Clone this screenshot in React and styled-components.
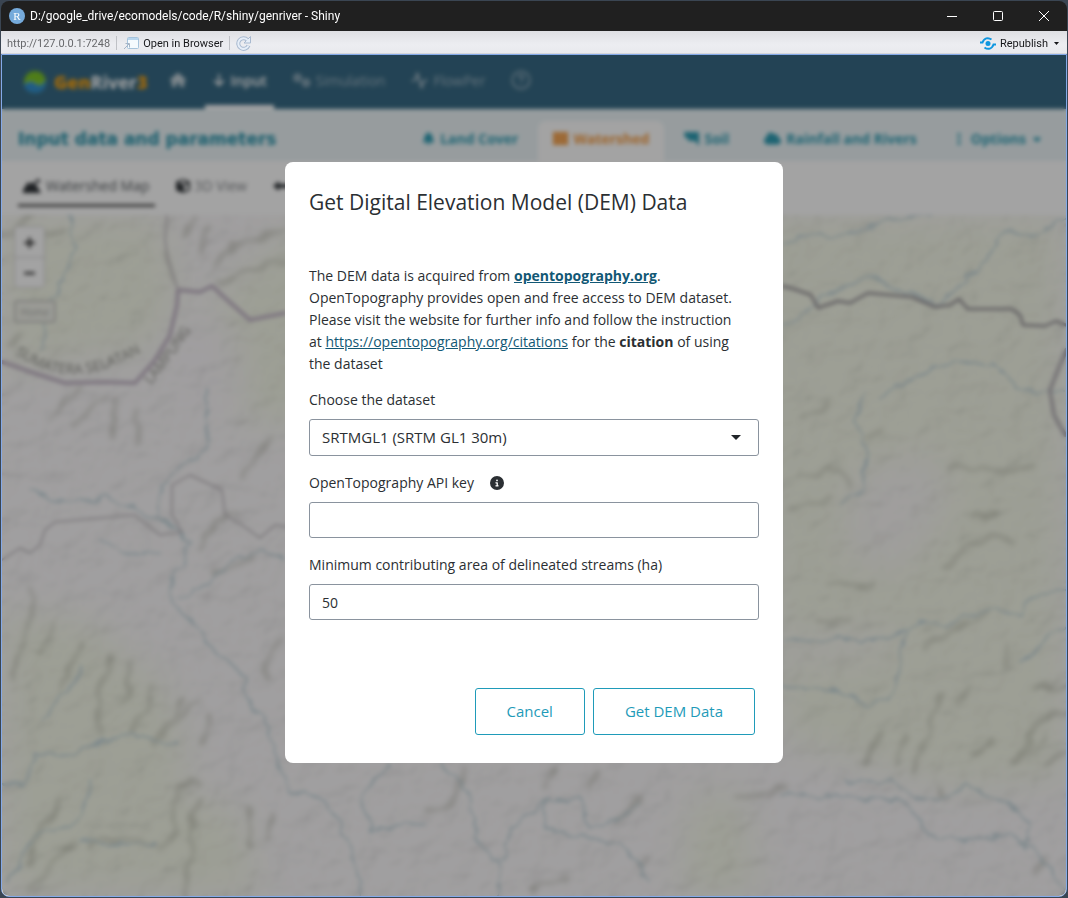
import React, { useState } from "react";
import styled, { createGlobalStyle, css } from "styled-components";
import { FaHouse, FaArrowDown, FaGears, FaBell, FaCloud, FaEllipsisVertical, FaCube, FaCaretDown, FaCircleInfo } from "react-icons/fa6";
import { LuActivity } from "react-icons/lu";

const GlobalStyle = createGlobalStyle`
  * { box-sizing: border-box; }
  html { background: #3a4552; }
  body {
    margin: 0;
    font-family: "Open Sans", "Noto Sans", sans-serif;
    font-size: 14px;
    color: #2b2f33;
  }
  button, input, select { font: inherit; color: inherit; }
`;

const Window = styled.div`
  min-height: 100vh;
  padding: 1px;
  display: flex;
  flex-direction: column;
`;

const TitleBar = styled.header`
  height: 30px;
  flex: none;
  display: flex;
  align-items: center;
  padding-left: 8px;
  background: #202020;
  border-radius: 8px 8px 0 0;
  color: #fff;
  font-size: 12px;
`;

const RBadge = styled.span`
  width: 16px;
  height: 16px;
  margin-right: 5px;
  border-radius: 50%;
  background: #75aadb;
  font: 11px/16px "Liberation Serif", serif;
  text-align: center;
`;

const Caption = styled.span`
  flex: 1;
  font-family: Roboto, sans-serif;
  white-space: nowrap;
`;

const WindowButton = styled.button`
  width: 46px;
  height: 30px;
  padding: 0;
  border: 0;
  background: none;
  display: grid;
  place-items: center;
  color: #fff;
`;

const ToolBar = styled.div`
  height: 23px;
  flex: none;
  display: flex;
  align-items: center;
  gap: 6px;
  padding: 2px 8px 0 6px;
  background: linear-gradient(#dedfe3, #ecedf1 60%, #e9eaee);
  border-bottom: 1px solid #d3d5da;
  font-family: Roboto, sans-serif;
  font-size: 11px;
  white-space: nowrap;
`;

const Address = styled.span`
  color: #67686b;
`;

const Divider = styled.span`
  width: 1px;
  height: 14px;
  background: #bfc1c6;
`;

const ToolButton = styled.button`
  display: flex;
  align-items: center;
  gap: 4px;
  padding: 0;
  border: 0;
  background: none;
  color: #16171a;
  margin-left: ${(p) => (p.$end ? "auto" : 0)};
`;

const Viewer = styled.div`
  position: relative;
  flex: 1;
  display: flex;
  flex-direction: column;
  border: 1px solid #84a9e8;
  border-radius: 0 0 8px 8px;
  overflow: hidden;
`;

const Navbar = styled.nav`
  height: 54px;
  flex: none;
  display: flex;
  align-items: stretch;
  background: #386a85;
  padding-left: 22px;
`;

const Brand = styled.a`
  display: flex;
  align-items: center;
  gap: 8px;
  margin-right: 15px;
  color: #fff;
  font-size: 18px;
  font-weight: 700;
  text-decoration: none;
  b { color: #fda50f; }
`;

const NavItem = styled.a`
  display: flex;
  align-items: center;
  gap: 5px;
  padding: 0 7px;
  margin-right: 12px;
  color: #9fb6c4;
  text-decoration: none;
  border-bottom: 4px solid transparent;
  ${(p) => p.$bright && css`color: #c3d2da;`}
  ${(p) => p.$active && css`
    color: #fff;
    font-weight: 600;
    border-bottom-color: #fff;
  `}
`;

const SubHeader = styled.header`
  height: 52px;
  flex: none;
  display: flex;
  align-items: stretch;
  background: #ecf5f8;
  padding: 0 8px 0 16px;
`;

const PageTitle = styled.h1`
  margin: 0 auto 0 0;
  align-self: center;
  padding-top: 8px;
  color: #2592aa;
  font: bold 17px "DejaVu Sans", sans-serif;
  white-space: nowrap;
`;

const SectionTab = styled.a`
  display: flex;
  align-items: center;
  gap: 5px;
  margin-top: 12px;
  margin-left: 5px;
  padding: 0 15px 5px;
  border-radius: 8px 8px 0 0;
  color: #2f9db4;
  font-weight: 700;
  text-decoration: none;
  white-space: nowrap;
  ${(p) => p.$active && css`
    background: #fff;
    color: #f59a3e;
  `}
`;

const ViewTabs = styled.nav`
  height: 54px;
  flex: none;
  display: flex;
  gap: 16px;
  padding: 0 16px 8px;
  background: #fff;
`;

const ViewTab = styled.a`
  display: flex;
  align-items: center;
  gap: 5px;
  padding: 6px 5px 0;
  border-bottom: 3px solid transparent;
  color: #86898d;
  text-decoration: none;
  svg { color: #33373b; }
  ${(p) => p.$active && css`
    color: #555a5e;
    border-bottom-color: #666;
  `}
`;

const MapPane = styled.main`
  position: relative;
  flex: 1;
  min-height: 400px;
  background: #f6f7ef;
`;

const Terrain = styled.svg`
  position: absolute;
  inset: 0;
  width: 100%;
  height: 100%;
`;

const Relief = styled.rect`
  mix-blend-mode: multiply;
`;

const MapControls = styled.div`
  position: relative;
  display: flex;
  flex-direction: column;
  align-items: flex-start;
  gap: 12px;
  padding: 11px 12px;
`;

const ZoomGroup = styled.div`
  display: flex;
  flex-direction: column;
  border: 1px solid #d0d0d0;
  border-radius: 4px;
  overflow: hidden;
`;

const ZoomButton = styled.button`
  width: 29px;
  height: 30px;
  padding: 0 0 2px;
  border: 0;
  background: #fff;
  color: #333;
  font-size: 22px;
  font-weight: 700;
  line-height: 26px;
  & + & { border-top: 1px solid #ccc; }
`;

const HomeButton = styled.button`
  width: 42px;
  height: 23px;
  padding: 0;
  border: 2px solid #c9cac5;
  border-radius: 3px;
  background: #f1f2ea;
  color: #b3b5b0;
  font-size: 10px;
  line-height: 18px;
`;

const Backdrop = styled.div`
  position: absolute;
  inset: 0;
  display: flex;
  justify-content: center;
  align-items: flex-start;
  padding: 107px 16px 16px;
  background: rgba(0, 0, 0, 0.36);
  backdrop-filter: blur(2px);
`;

const Dialog = styled.form`
  width: 100%;
  max-width: 498px;
  padding: 24px;
  border-radius: 8px;
  background: #fff;
`;

const DialogTitle = styled.h2`
  margin: 0 0 47px;
  font-size: 21px;
  font-weight: 400;
  line-height: 32px;
`;

const Intro = styled.p`
  margin: 0 0 14px;
  padding-right: 14px;
  line-height: 22px;
`;

const TextLink = styled.a`
  color: #125875;
  font-weight: ${(p) => (p.$strong ? 700 : 400)};
`;

const Field = styled.div`
  margin-bottom: 16px;
`;

const Label = styled.label`
  display: flex;
  align-items: center;
  gap: 16px;
  margin-bottom: 8px;
  line-height: 22px;
`;

const control = css`
  display: block;
  width: 100%;
  height: 36px;
  padding: 0 12px;
  border: 1px solid #8a939e;
  border-radius: 3px;
  background: #fff;
  outline: 0;
`;

const Input = styled.input`${control}`;

const SelectWrap = styled.div`
  position: relative;
  svg {
    position: absolute;
    right: 18px;
    top: 16px;
    pointer-events: none;
  }
`;

const Select = styled.select`
  ${control}
  height: 37px;
  padding-bottom: 2px;
  font-size: 15px;
  appearance: none;
`;

const Actions = styled.div`
  display: flex;
  justify-content: flex-end;
  gap: 8px;
  padding: 52px 4px 4px;
`;

const ActionButton = styled.button`
  height: 47px;
  padding: 0 31px 2px;
  border: 1px solid #1f9bb9;
  border-radius: 3px;
  background: #fff;
  color: #1f9bb9;
  font-size: 15px;
  font-weight: 500;
`;

const sections = [
  { name: "Land Cover", icon: <FaBell size={13} /> },
  { name: "Watershed", icon: <Grid />, active: true },
  { name: "Soil", icon: <Flag /> },
  { name: "Rainfall and Rivers", icon: <FaCloud size={17} /> },
];

const rivers = [
  "M70 215 75 245 65 275 48 305 42 350",
  "M208 390 208 425 205 450 180 470 162 485 158 520 180 530 188 545 182 567 171 575 172 605 195 625 212 650 240 672 252 705 270 730 280 770 292 790 325 800 340 825 357 870 361 896",
  "M30 490 60 503 105 498 135 510 160 522 183 532",
  "M100 540 125 555 160 552",
  "M178 600 205 585 235 562 260 548 285 560",
  "M2 783 25 785 35 755 70 755 100 742 135 735 175 745",
  "M10 880 35 835 75 825 85 805 90 780",
  "M80 840 110 845 155 843",
  "M45 720 60 695 78 680 82 665",
  "M783 245 800 235 850 237 890 218 935 215",
  "M1066 217 1035 235 1005 230 985 260 960 285 945 300 938 305 895 288 870 278 835 290 800 318 783 325",
  "M880 398 905 382 950 362 995 365 1020 390 1066 392",
  "M865 392 855 420 868 450 862 490 840 505",
  "M1066 590 1030 598 1020 615 990 608 950 625 915 622 902 640 900 670 890 698 870 705 835 690 783 687",
  "M783 795 850 797 900 800 920 820 925 835 965 840 1010 835 1035 850 1066 890",
  "M845 782 890 780 915 798 950 798 965 785 1010 805 1030 825 1025 850",
  "M1066 625 1040 645 1020 665",
  "M440 765 470 790 475 840 502 865 497 896",
  "M502 860 510 830 545 800 580 800 590 828 620 818 640 805",
  "M545 800 545 828 620 845 650 880",
  "M390 765 362 795 372 830 425 822",
  "M783 640 880 640 905 630",
];
const borders = [
  "M2 362 40 375 65 383 105 382 135 383 155 360 170 335 177 305 178 290 200 292 212 286 225 298 250 320 285 313",
  "M783 286 797 290 811 295 818 308 838 301 850 303 868 293 912 297 935 307 950 305 959 299 968 309 1012 309 1020 315 1023 325 1045 326 1056 321 1066 325",
  "M1066 350 1058 370 1050 390 1054 415 1065 435",
];
const roads = [
  "M2 560 20 548 30 553 40 545 45 530 55 522 135 515 160 535 182 532 172 515 172 485 190 475 222 490 225 515 242 525 260 538 275 525 290 527",
  "M167 215 165 240 168 260 178 290",
];
const ridges = [
  "M285 230 255 240 230 248 216 265 M285 265 250 268 222 282 M210 230 202 250 M190 215 184 235",
  "M105 395 92 412 72 426 M115 400 120 420 110 440 M140 408 135 440 M80 390 60 405 50 420",
  "M2 235 18 225 35 215 M40 235 70 228 M165 255 172 280 M10 345 25 335",
  "M110 660 100 700 98 730 M130 670 125 705 M35 590 28 630 12 680 M84 645 60 690 M55 625 38 650 M180 700 155 745 M155 680 148 705 130 735",
  "M200 700 180 715 165 735 M250 560 215 570 M240 515 215 520 200 550 M272 440 240 478",
  "M60 800 45 825 30 850 28 865 M75 845 45 870 30 890 M195 780 177 795 175 830 158 850 M200 800 190 850 185 896 M90 845 155 840",
  "M250 810 250 845 M272 815 270 840 M265 680 275 640 M205 745 210 720 M465 765 455 800 425 815",
  "M555 765 545 790 M600 770 588 790 M640 800 620 820 M530 890 570 882 M640 860 650 855 M740 800 783 785",
  "M950 470 1000 465 M1000 475 1040 465 M970 520 1000 510 M950 565 985 535 1015 545 M925 650 985 610 M870 580 830 585",
  "M815 622 850 618 M1010 640 1005 665 M945 690 935 715 920 745 M970 690 955 705 M1066 680 1035 690 M1066 710 1035 720 1020 755",
  "M880 735 865 765 M905 735 895 765 M925 745 915 770 M990 740 970 758 M1040 740 1015 765 M1066 750 1045 765",
  "M800 475 840 468 850 490 M790 510 830 500 M870 435 885 432 M800 420 830 402 M1045 855 1035 870 M940 785 945 800",
];

function Grid() {
  return (
    <svg width="15" height="13" viewBox="0 0 15 13" fill="currentColor">
      <path d="M0 0h15v13H0z" />
      <path d="M5 0v13M10 0v13M0 4h15M0 9h15" stroke="#fff" strokeOpacity=".35" />
    </svg>
  );
}

function Flag() {
  return (
    <svg width="15" height="14" viewBox="0 0 15 14" fill="currentColor">
      <path d="M0 0h15v14l-4-5H4V6H1z" />
    </svg>
  );
}

function Mountain() {
  return (
    <svg width="18" height="15" viewBox="0 0 18 15" fill="currentColor">
      <path d="M0 15V12L5 4l3 2 3-3 7 12z" />
      <circle cx="15" cy="3" r="2" />
    </svg>
  );
}

function Logo() {
  return (
    <svg width="22" height="22" viewBox="0 0 22 22">
      <circle cx="11" cy="11" r="11" fill="#7cc427" />
      <path d="M0 14C4 9 8 10 12 13s7 1 10-4c1 8-4 13-11 13C5 22 1 19 0 14z" fill="#3390cf" />
      <path d="M1 13c4-4 7-3 10-1s7 1 10-3" fill="none" stroke="#9fd5a5" />
    </svg>
  );
}

function TerrainMap() {
  return (
    <Terrain viewBox="2 215 1064 681" preserveAspectRatio="xMidYMid slice" aria-hidden="true">
      <defs>
        <filter id="relief" x="0" y="0" width="100%" height="100%">
          <feTurbulence type="fractalNoise" baseFrequency="0.03 0.04" numOctaves="4" seed="11" />
          <feDiffuseLighting surfaceScale="7" diffuseConstant="1.15" lightingColor="#fff">
            <feDistantLight azimuth="225" elevation="60" />
          </feDiffuseLighting>
        </filter>
        <filter id="soft"><feGaussianBlur stdDeviation="18" /></filter>
        <filter id="shade" x="-5%" y="-5%" width="110%" height="110%">
          <feTurbulence type="fractalNoise" baseFrequency="0.04" numOctaves="2" seed="4" result="n" />
          <feDisplacementMap in="SourceGraphic" in2="n" scale="20" xChannelSelector="R" yChannelSelector="G" />
          <feGaussianBlur stdDeviation="2" />
        </filter>
        <filter id="meander" x="-5%" y="-5%" width="110%" height="110%">
          <feTurbulence type="fractalNoise" baseFrequency="0.07" numOctaves="2" seed="8" result="n" />
          <feDisplacementMap in="SourceGraphic" in2="n" scale="12" xChannelSelector="R" yChannelSelector="G" />
        </filter>
        <path id="arc-sumatera" d="M15 354Q55 382 96 371T170 332" />
        <path id="arc-lampung" d="M151 385Q178 352 200 316" />
      </defs>
      <rect x="2" y="215" width="1064" height="681" fill="#fbf9fa" />
      <g fill="#f6f9ea" filter="url(#soft)">
        <path d="M2 215H160L180 300 150 350 2 370z" />
        <path d="M210 300 290 230 760 215H1066V780L960 790 780 740 760 480 240 420z" />
        <path d="M2 610 90 620 170 690 190 760 150 896H2z" />
        <path d="M690 800 740 790 760 896H680zM170 790 240 810 260 896H150z" />
      </g>
      <g fill="#fcf8fc" filter="url(#soft)" opacity=".7">
        <path d="M850 480 930 450 950 500 900 570 850 560zM190 310 240 330 240 420 190 400zM780 640 900 630 890 650 780 665z" />
      </g>
      <Relief x="2" y="215" width="1064" height="681" filter="url(#relief)" opacity=".22" />
      <g fill="none" strokeLinecap="round" strokeLinejoin="round">
        <g stroke="#8f9080" strokeWidth="4" opacity=".35" filter="url(#shade)">
          {ridges.map((d) => <path key={d} d={d} />)}
        </g>
        <g stroke="#bfd3da" strokeWidth="2" opacity=".9" filter="url(#meander)">
          {rivers.map((d) => <path key={d} d={d} />)}
        </g>
        <g stroke="#bcb6bc" strokeWidth="2" opacity=".8">
          {roads.map((d) => <path key={d} d={d} />)}
        </g>
        <path d={borders[0]} stroke="#c6bac9" strokeWidth="4" />
        <path d={borders[1]} stroke="#a29fa2" strokeWidth="3" />
        <path d={borders[2]} stroke="#b9b5b9" strokeWidth="4" strokeDasharray="14 3" />
      </g>
      <g fill="#91918b" fontSize="14" fontFamily="Open Sans, sans-serif">
        <text><textPath href="#arc-sumatera">SUMATERA SELATAN</textPath></text>
        <text><textPath href="#arc-lampung">LAMPUNG</textPath></text>
      </g>
    </Terrain>
  );
}

export default function App() {
  const [dataset, setDataset] = useState("SRTMGL1");
  const [apiKey, setApiKey] = useState("");
  const [area, setArea] = useState("50");

  return (
    <>
      <GlobalStyle />
      <Window>
        <TitleBar>
          <RBadge>R</RBadge>
          <Caption>D:/google_drive/ecomodels/code/R/shiny/genriver - Shiny</Caption>
          <WindowButton aria-label="Minimize">
            <svg width="10" height="10" stroke="currentColor"><path d="M0 5.5h10" /></svg>
          </WindowButton>
          <WindowButton aria-label="Maximize">
            <svg width="10" height="10" stroke="currentColor" fill="none"><rect x=".5" y=".5" width="9" height="9" rx="1" /></svg>
          </WindowButton>
          <WindowButton aria-label="Close">
            <svg width="10" height="10" stroke="currentColor"><path d="M0 0l10 10M10 0 0 10" /></svg>
          </WindowButton>
        </TitleBar>
        <ToolBar>
          <Address>http://127.0.0.1:7248</Address>
          <Divider />
          <ToolButton>
            <svg width="16" height="13" viewBox="0 0 16 13">
              <rect x="4.5" y=".5" width="11" height="11" rx="1" fill="#f4fafe" stroke="#a5c3dc" />
              <path d="M5 1h10v2H5z" fill="#b7d5ed" />
              <path d="M1 12l5-5M2.500 6.500H6.500V10.500" fill="none" stroke="#a5b4c6" />
            </svg>
            Open in Browser
          </ToolButton>
          <Divider />
          <ToolButton aria-label="Refresh">
            <svg width="15" height="15" viewBox="0 0 15 15" fill="none">
              <path d="M11.500 4A5.300 5.300 0 1 0 12.500 9.500" stroke="#a9bad0" strokeWidth="4" />
              <path d="M14.500.5V7H8z" fill="#e6eef8" stroke="#a9bad0" />
              <path d="M11.500 4A5.300 5.300 0 1 0 12.500 9.500" stroke="#e6eef8" strokeWidth="2" />
            </svg>
          </ToolButton>
          <ToolButton $end>
            <svg width="16" height="13" viewBox="0 0 16 13" fill="none" stroke="#0f97e0" strokeWidth="2">
              <circle cx="8" cy="6.500" r="2.500" fill="#0f97e0" stroke="none" />
              <path d="M0 5.500h2.500C4 1 8 0 11.500 2.500M16 7.500h-2.500C12 12 8 13 4.500 10.500" />
            </svg>
            Republish
          </ToolButton>
          <ToolButton aria-label="Publish options">
            <svg width="5" height="3" viewBox="0 0 5 3"><path d="M0 0h5L2.500 3z" fill="#16171a" /></svg>
          </ToolButton>
        </ToolBar>
        <Viewer>
          <Navbar>
            <Brand href="#home"><Logo /><span><b>Gen</b>River<b>3</b></span></Brand>
            <NavItem href="#home" $bright aria-label="Home"><FaHouse size={16} /></NavItem>
            <NavItem href="#input" $active><FaArrowDown size={14} />Input</NavItem>
            <NavItem href="#simulation"><FaGears size={18} />Simulation</NavItem>
            <NavItem href="#flowper"><LuActivity size={17} strokeWidth={3} />FlowPer</NavItem>
            <NavItem href="#help" aria-label="Help">
              <svg width="20" height="20" viewBox="0 0 20 20" fill="none" stroke="currentColor" strokeWidth="1.500">
                <circle cx="10" cy="10" r="8.800" />
                <path d="M7.500 8c0-3.500 5-3.500 5-.5 0 2-2.500 2-2.500 4M10 13.500V15" />
              </svg>
            </NavItem>
          </Navbar>
          <SubHeader>
            <PageTitle>Input data and parameters</PageTitle>
            {sections.map((s) => (
              <SectionTab key={s.name} href="#section" $active={s.active}>{s.icon}{s.name}</SectionTab>
            ))}
            <SectionTab href="#options"><FaEllipsisVertical size={14} />Options<FaCaretDown size={12} /></SectionTab>
          </SubHeader>
          <ViewTabs>
            <ViewTab href="#map" $active><Mountain />Watershed Map</ViewTab>
            <ViewTab href="#3d"><FaCube size={14} />3D View</ViewTab>
            <ViewTab href="#more" aria-label="More">
              <svg width="16" height="12" viewBox="0 0 16 12" fill="currentColor"><path d="M0 6l6-5v3h10v4H6v3z" /></svg>
            </ViewTab>
          </ViewTabs>
          <MapPane>
            <TerrainMap />
            <MapControls>
              <ZoomGroup>
                <ZoomButton aria-label="Zoom in">+</ZoomButton>
                <ZoomButton aria-label="Zoom out">−</ZoomButton>
              </ZoomGroup>
              <HomeButton>Home</HomeButton>
            </MapControls>
          </MapPane>
          <Backdrop>
            <Dialog role="dialog" aria-labelledby="dem-title" onSubmit={(e) => e.preventDefault()}>
              <DialogTitle id="dem-title">Get Digital Elevation Model (DEM) Data</DialogTitle>
              <Intro>
                The DEM data is acquired from <TextLink $strong href="#opentopography">opentopography.org</TextLink>.
                OpenTopography provides open and free access to DEM dataset. Please visit the website for
                further info and follow the instruction at{" "}
                <TextLink href="#citations">https://opentopography.org/citations</TextLink> for the{" "}
                <strong>citation</strong> of using the dataset
              </Intro>
              <Field>
                <Label htmlFor="dataset">Choose the dataset</Label>
                <SelectWrap>
                  <Select id="dataset" value={dataset} onChange={(e) => setDataset(e.target.value)}>
                    <option value="SRTMGL1">SRTMGL1 (SRTM GL1 30m)</option>
                  </Select>
                  <svg width="10" height="5" viewBox="0 0 10 5"><path d="M0 0h10L5 5z" fill="#212529" /></svg>
                </SelectWrap>
              </Field>
              <Field>
                <Label htmlFor="api-key">OpenTopography API key <FaCircleInfo size={14} /></Label>
                <Input id="api-key" value={apiKey} onChange={(e) => setApiKey(e.target.value)} />
              </Field>
              <Field>
                <Label htmlFor="area">Minimum contributing area of delineated streams (ha)</Label>
                <Input id="area" value={area} inputMode="numeric" onChange={(e) => setArea(e.target.value)} />
              </Field>
              <Actions>
                <ActionButton type="button">Cancel</ActionButton>
                <ActionButton type="submit">Get DEM Data</ActionButton>
              </Actions>
            </Dialog>
          </Backdrop>
        </Viewer>
      </Window>
    </>
  );
}
